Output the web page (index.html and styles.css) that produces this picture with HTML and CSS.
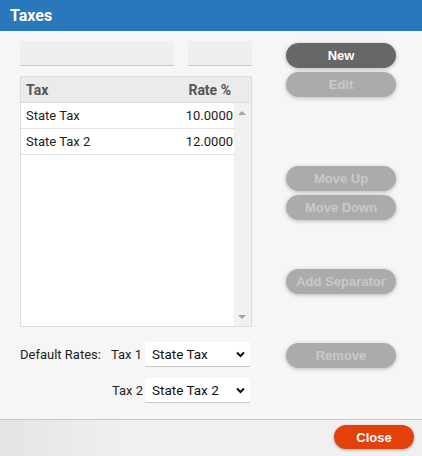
FILE: index.html
```html
<!DOCTYPE html>
<html>
<head>
<meta charset="utf-8">
<link rel="stylesheet" href="styles.css">
</head>
<body>
<div class="dialog">
  <div class="titlebar">Taxes</div>
  <div class="content">
    <div class="left">
      <div class="inputs">
        <div class="field wide"></div>
        <div class="field narrow"></div>
      </div>
      <div class="table">
        <div class="thead">
          <div class="th name">Tax</div>
          <div class="th rate">Rate %</div>
        </div>
        <div class="tbody">
          <div class="rows">
            <div class="row"><div class="cell name">State Tax</div><div class="cell rate">10.0000</div></div>
            <div class="row"><div class="cell name">State Tax 2</div><div class="cell rate">12.0000</div></div>
          </div>
          <div class="scrollbar">
            <span class="arrow up"></span>
            <span class="arrow down"></span>
          </div>
        </div>
      </div>
      <div class="defaults">
        <div class="drow">
          <span class="dlabel">Default Rates:</span>
          <span class="tlabel">Tax 1</span>
          <div class="select"><span>State Tax</span><svg width="9" height="7" viewBox="0 0 9 7"><path d="M1 1.5 L4.5 5 L8 1.5" fill="none" stroke="#111" stroke-width="2"/></svg></div>
        </div>
        <div class="drow second">
          <span class="tlabel">Tax 2</span>
          <div class="select"><span>State Tax 2</span><svg width="9" height="7" viewBox="0 0 9 7"><path d="M1 1.5 L4.5 5 L8 1.5" fill="none" stroke="#111" stroke-width="2"/></svg></div>
        </div>
      </div>
    </div>
    <div class="right">
      <button class="btn primary">New</button>
      <button class="btn dis g1">Edit</button>
      <button class="btn dis g2">Move Up</button>
      <button class="btn dis g1">Move Down</button>
      <button class="btn dis g3">Add Separator</button>
      <button class="btn dis g3">Remove</button>
    </div>
  </div>
  <div class="footer">
    <button class="close">Close</button>
  </div>
</div>
</body>
</html>
```
FILE: styles.css
```css
* { box-sizing: border-box; }
html, body { margin: 0; padding: 0; }
body { width: 422px; height: 456px; overflow: hidden; font-family: Roboto, "Liberation Sans", sans-serif; background: #f5f5f5; }
.dialog { width: 422px; height: 456px; display: flex; flex-direction: column; }
.titlebar { height: 31px; background: #2a78bc; color: #fff; font-weight: 700; font-size: 16px; line-height: 31px; padding-left: 10px; }
.content { flex: 1; display: flex; background: #f6f6f6; }
.left { width: 252px; padding-left: 20px; padding-top: 10px; }
.inputs { display: flex; gap: 14px; height: 25px; }
.field { height: 25px; background: #efefef; border-bottom: 1px solid #c8c8c8; }
.field.wide { width: 154px; }
.field.narrow { width: 64px; }
.table { margin-top: 10px; width: 232px; height: 251px; border: 1px solid #dcdcdc; display: flex; flex-direction: column; background: #fff; }
.thead { height: 26px; background: #ebebeb; display: flex; align-items: center; font-weight: 700; font-size: 14px; color: #555; border-bottom: 1px solid #dcdcdc; padding-right: 20px; }
.th.name { flex: 1; padding-left: 5px; }
.tbody { flex: 1; display: flex; }
.rows { flex: 1; }
.row { height: 26px; display: flex; align-items: center; border-bottom: 1px solid #e2e2e2; font-size: 13px; color: #222; }
.cell.name { flex: 1; padding-left: 5px; }
.cell.rate { padding-right: 1px; color: #1a1a1a; }
.scrollbar { width: 17px; background: #f1f1f1; position: relative; }
.arrow { position: absolute; left: 4px; width: 0; height: 0; border-left: 4px solid transparent; border-right: 4px solid transparent; }
.arrow.up { top: 8px; border-bottom: 4px solid #a3a3a3; }
.arrow.down { bottom: 7px; border-top: 4px solid #a3a3a3; }
.defaults { margin-top: 15px; }
.drow { display: flex; align-items: center; height: 25px; font-size: 13px; color: #222; }
.drow.second { margin-top: 11px; justify-content: flex-end; padding-right: 2px; }
.drow:first-child { padding-right: 2px; }
.dlabel { width: 91px; }
.tlabel { width: 34px; }
.drow.second .tlabel { width: 33px; }
.select { width: 105px; height: 25px; background: #fff; border-bottom: 1px solid #c8c8c8; display: flex; align-items: center; justify-content: space-between; padding: 0 5px 0 7px; font-size: 13.5px; color: #111; }
.select svg { display: block; margin-top: 1px; }
.right { padding-left: 34px; padding-top: 12px; display: flex; flex-direction: column; }
.btn { width: 110px; height: 25px; border: none; border-radius: 13px; font-family: "Liberation Sans", Arial, sans-serif; font-weight: 700; font-size: 13px; box-shadow: 0 1px 4px rgba(0,0,0,0.25); padding: 0; }
.btn.primary { background: #676767; color: #fff; }
.btn.dis { background: #ababab; color: #c9c9c9; }
.btn.g1 { margin-top: 4px; }
.btn.g2 { margin-top: 69px; }
.btn.g3 { margin-top: 49px; }
.footer { height: 37px; border-top: 1px solid #c9c9c9; background: linear-gradient(to right, #e4e4e4, #f0f0f0 30%, #f0f0f0); display: flex; justify-content: flex-end; align-items: flex-start; padding-top: 5px; padding-right: 8px; }
.close { width: 80px; height: 24px; border: none; border-radius: 12px; background: #e4400a; color: #fff; font-family: "Liberation Sans", Arial, sans-serif; font-weight: 700; font-size: 13px; box-shadow: 0 1px 3px rgba(0,0,0,0.3); padding: 0; }
```
